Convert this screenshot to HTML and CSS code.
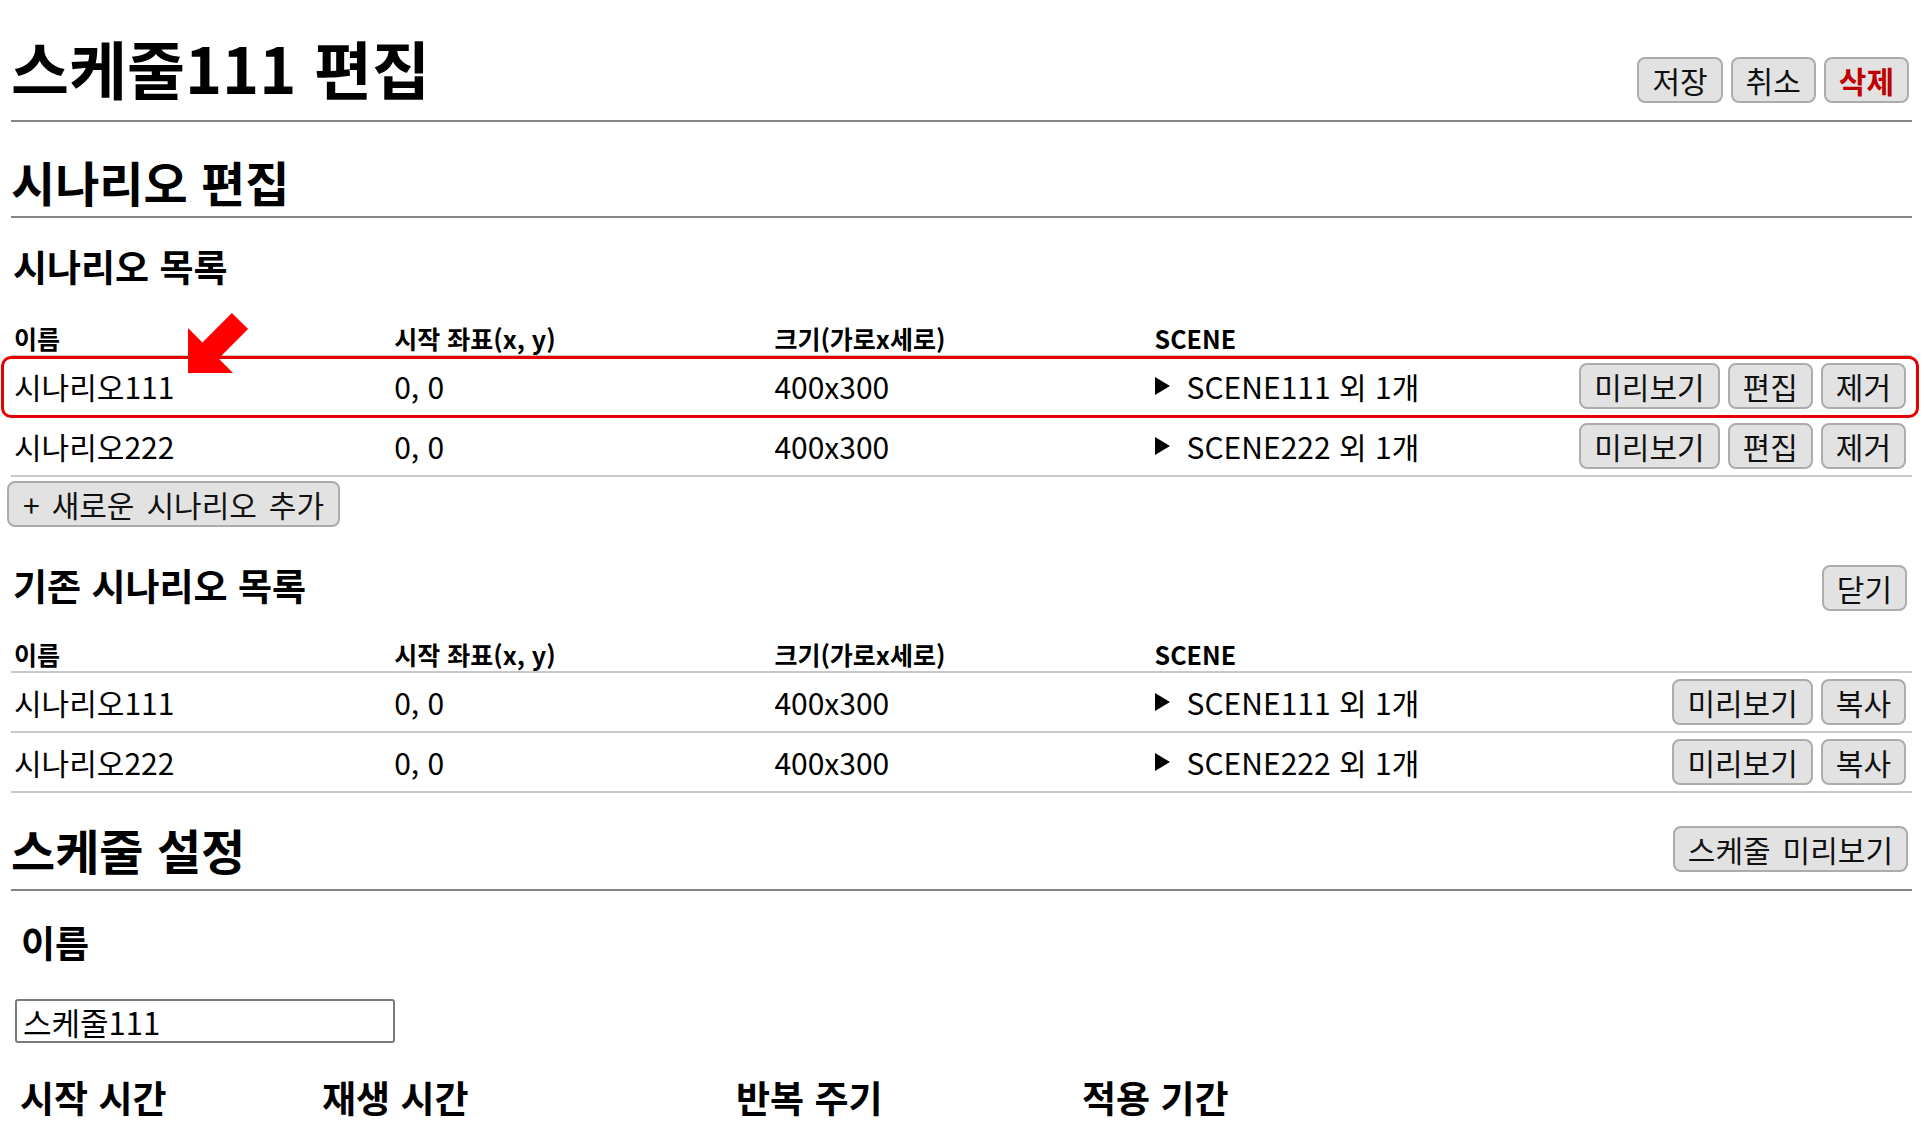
FILE: index.html
```html
<!DOCTYPE html>
<html lang="ko">
<head>
<meta charset="utf-8">
<title>스케줄111 편집</title>
<link rel="stylesheet" href="styles.css">
</head>
<body>
<div class="page">
  <header class="top">
    <h1 class="title">스케줄111 편집</h1>
    <div class="actions">
      <button class="btn">저장</button>
      <button class="btn">취소</button>
      <button class="btn danger">삭제</button>
    </div>
  </header>

  <section class="section">
    <h2 class="sec-title">시나리오 편집</h2>
    <h3 class="sub-title">시나리오 목록</h3>
    <div class="table">
      <div class="row head">
        <div class="cell">이름</div>
        <div class="cell">시작 좌표(x, y)</div>
        <div class="cell">크기(가로x세로)</div>
        <div class="cell">SCENE</div>
        <div class="cell"></div>
      </div>
      <div class="row marked">
        <div class="cell">시나리오111</div>
        <div class="cell">0, 0</div>
        <div class="cell">400x300</div>
        <div class="cell"><span class="tri"></span>SCENE111 외 1개</div>
        <div class="cell ops"><button class="btn">미리보기</button><button class="btn">편집</button><button class="btn">제거</button></div>
        <div class="highlight"></div>
        <svg class="arrow" width="66" height="66" viewBox="0 0 66 66"><polygon points="2,63 2,18 16.4,32.4 45.9,2.9 62.1,19.1 32.6,48.6 47,63" fill="#ff0000"/></svg>
      </div>
      <div class="row">
        <div class="cell">시나리오222</div>
        <div class="cell">0, 0</div>
        <div class="cell">400x300</div>
        <div class="cell"><span class="tri"></span>SCENE222 외 1개</div>
        <div class="cell ops"><button class="btn">미리보기</button><button class="btn">편집</button><button class="btn">제거</button></div>
      </div>
    </div>
    <button class="btn add">+ 새로운 시나리오 추가</button>

    <div class="sub-row">
      <h3 class="sub-title inline">기존 시나리오 목록</h3>
      <button class="btn">닫기</button>
    </div>
    <div class="table">
      <div class="row head">
        <div class="cell">이름</div>
        <div class="cell">시작 좌표(x, y)</div>
        <div class="cell">크기(가로x세로)</div>
        <div class="cell">SCENE</div>
        <div class="cell"></div>
      </div>
      <div class="row">
        <div class="cell">시나리오111</div>
        <div class="cell">0, 0</div>
        <div class="cell">400x300</div>
        <div class="cell"><span class="tri"></span>SCENE111 외 1개</div>
        <div class="cell ops"><button class="btn">미리보기</button><button class="btn">복사</button></div>
      </div>
      <div class="row">
        <div class="cell">시나리오222</div>
        <div class="cell">0, 0</div>
        <div class="cell">400x300</div>
        <div class="cell"><span class="tri"></span>SCENE222 외 1개</div>
        <div class="cell ops"><button class="btn">미리보기</button><button class="btn">복사</button></div>
      </div>
    </div>
  </section>

  <section class="section">
    <div class="sec-row">
      <h2 class="sec-title2">스케줄 설정</h2>
      <button class="btn">스케줄 미리보기</button>
    </div>
    <label class="field-label" for="name">이름</label>
    <input id="name" class="text-input" type="text" value="스케줄111">
    <div class="fields">
      <span class="field-label2">시작 시간</span>
      <span class="field-label2">재생 시간</span>
      <span class="field-label2">반복 주기</span>
      <span class="field-label2">적용 기간</span>
    </div>
  </section>
</div>
</body>
</html>
```

FILE: styles.css
```css
* { box-sizing: border-box; }

html, body {
  margin: 0;
  padding: 0;
  background: #fff;
  color: #000;
  font-family: "Noto Sans CJK KR", "Noto Sans", sans-serif;
  overflow: hidden;
}

.page {
  padding: 0 12px 0 11px;
}

/* buttons */
.btn {
  font-family: "Noto Sans CJK KR", "Noto Sans", sans-serif;
  font-size: 30px;
  line-height: 1;
  word-spacing: 0.12em;
  height: 46px;
  padding: 0 13px;
  background: #e2e2e2;
  border: 2px solid #acacac;
  border-radius: 8px;
  color: #111;
  display: inline-flex;
  align-items: center;
  justify-content: center;
  white-space: nowrap;
}
.btn.danger {
  color: #c00000;
  font-weight: 700;
}

/* top header */
.top {
  display: flex;
  justify-content: space-between;
  align-items: center;
  height: 122px;
  padding-top: 14px;
  border-bottom: 2px solid #858585;
}
.title {
  margin: 0;
  font-size: 63px;
  line-height: 106px;
  font-weight: 700;
}
.actions {
  display: flex;
  gap: 8px;
  align-self: flex-end;
  margin-bottom: 17px;
  margin-right: 3px;
}

/* section titles */
.sec-title {
  margin: 0;
  padding-top: 24px;
  font-size: 48px;
  line-height: 70px;
  font-weight: 700;
  border-bottom: 2px solid #858585;
}
.sub-title {
  margin: 0;
  padding: 26px 0 7px 2px;
  font-size: 37px;
  line-height: 44px;
  font-weight: 700;
}
.sub-title.inline {
  padding: 0 0 6px 2px;
}
.sub-row {
  display: flex;
  justify-content: space-between;
  align-items: center;
  margin-top: 38px;
  height: 46px;
  padding-right: 5px;
}

/* tables */
.table {
  display: flex;
  flex-direction: column;
}
.row {
  display: grid;
  grid-template-columns: repeat(5, 1fr);
  align-items: center;
  height: 60px;
  border-bottom: 2px solid #c8c8c8;
  font-size: 30px;
}
.row.head {
  height: 62px;
  align-items: end;
  padding-bottom: 2px;
  font-size: 25px;
  font-weight: 700;
  line-height: 30px;
}
.cell {
  padding-left: 3px;
  white-space: nowrap;
  display: flex;
  align-items: center;
}
.cell.ops {
  justify-content: flex-end;
  gap: 8px;
  padding-right: 6px;
}
.tri {
  display: inline-block;
  width: 0;
  height: 0;
  border-left: 15px solid #000;
  border-top: 9px solid transparent;
  border-bottom: 9px solid transparent;
  margin-right: 17px;
}

.row.marked { position: relative; }
.highlight {
  position: absolute;
  top: -1px;
  bottom: -3px;
  left: -10px;
  right: -7px;
  border: 3px solid #e60000;
  border-radius: 10px;
  pointer-events: none;
}
.arrow {
  position: absolute;
  left: 175px;
  top: -47px;
}

.add {
  margin-top: 4px;
  margin-left: -4px;
  padding: 0 14px;
}

/* schedule section */
.sec-row {
  display: flex;
  justify-content: space-between;
  align-items: center;
  padding-top: 16px;
  height: 98px;
  border-bottom: 2px solid #858585;
}
.sec-title2 {
  margin: 0;
  font-size: 48px;
  line-height: 80px;
  font-weight: 700;
}
.sec-row .btn {
  margin-right: 4px;
}
.field-label {
  display: block;
  padding: 29px 0 0 10px;
  font-size: 37px;
  line-height: 44px;
  font-weight: 700;
}
.text-input {
  display: block;
  margin-top: 35px;
  margin-left: 4px;
  width: 380px;
  height: 44px;
  padding: 0 6px;
  border: 2px solid #7a7a7a;
  border-radius: 3px;
  font-family: "Noto Sans CJK KR", "Noto Sans", sans-serif;
  font-size: 31px;
  color: #000;
}
.fields {
  display: grid;
  grid-template-columns: 302px 414px 346px auto;
  padding: 32px 0 0 9px;
}
.field-label2 {
  font-size: 37px;
  line-height: 44px;
  font-weight: 700;
  white-space: nowrap;
}
```
